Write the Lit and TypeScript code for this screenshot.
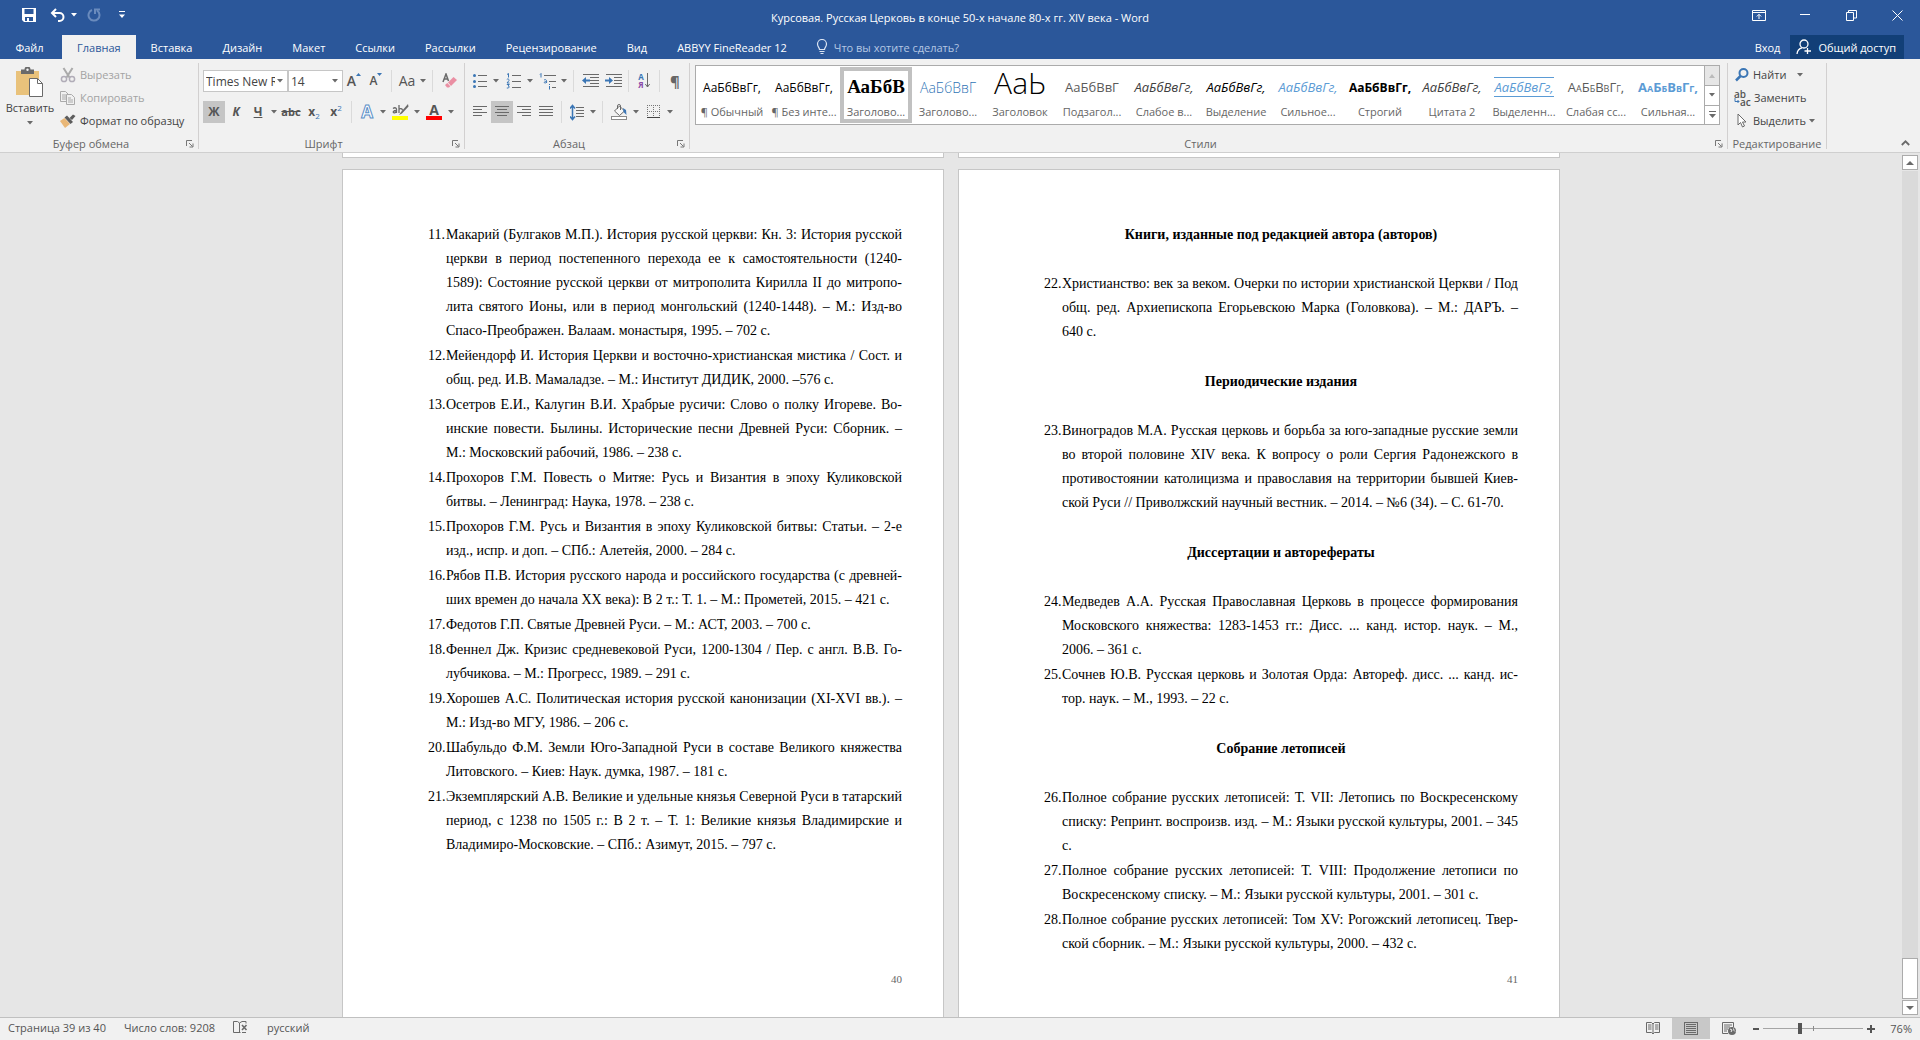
import { LitElement, html, css, svg, nothing } from "lit";
import { customElement, property } from "lit/decorators.js";
import { classMap } from "lit/directives/class-map.js";

const icon = (w: number, h: number, body: unknown) =>
  html`<svg class="icon" width=${w} height=${h} viewBox="0 0 ${w} ${h}" fill="none" aria-hidden="true">${body}</svg>`;

const caret = (color = "#6a6a6a") => icon(6, 4, svg`<path d="M0 0h6L3 3.5z" fill=${color}/>`);

const lines = (rows: [number, number, number][], color = "#6a6a6a") =>
  rows.map(([x, y, w]) => svg`<rect x=${x} y=${y} width=${w} height="1" fill=${color}/>`);

const G = "#6a6a6a";
const B = "#3b76b5";

const icons = {
  save: icon(16, 16, svg`<path d="M1 1h14v14H3l-2-2z" fill="#fff"/><path d="M3.500 2h9v5h-9zM4 10h8v4H4z" fill="#2b579a"/><path d="M6 11h2v3H6z" fill="#fff"/>`),
  undo: icon(16, 14, svg`<path d="M6 1L2 5l4 4M2.500 5H9.500a4 4 0 0 1 0 8H8" stroke="#fff" stroke-width="2"/>`),
  redo: icon(14, 14, svg`<path d="M5 2A5.500 5.500 0 1 0 10 2.500M8 6V1.500h5" stroke="#6a8bbd" stroke-width="2"/>`),
  more: icon(6, 8, svg`<path d="M0 0h6v1H0zM0 3.500h6L3 7z" fill="#fff"/>`),
  display: icon(14, 11, svg`<path d="M.5.5h13v10H.5zM1 2.500h12" stroke="#fff"/><path d="M7 9V4.500M4.800 6.500L7 4.300l2.200 2.200" stroke="#fff"/>`),
  min: icon(10, 2, svg`<path d="M0 0h10v1H0z" fill="#fff"/>`),
  restore: icon(11, 11, svg`<path d="M.5 2.500h7v8h-7zM2.500 2.500v-2h8v7.500h-2.500" stroke="#fff"/>`),
  close: icon(11, 11, svg`<path d="M.5.5l10 10M10.500.5l-10 10" stroke="#fff"/>`),
  bulb: icon(12, 16, svg`<path d="M3.500 10.500C3.500 8.500 1.500 8 1.500 5a4.500 4.500 0 0 1 9 0c0 3-2 3.500-2 5.500zM3.500 12.500h5M4.500 14.500h3" stroke="#dbe4f2" stroke-width="1.200"/>`),
  person: icon(16, 16, svg`<circle cx="8" cy="5" r="4" stroke="#fff" stroke-width="1.300"/><path d="M1 15c.3-3.500 2-5.500 5-6.200M11.500 9v6M8.500 12h6.500" stroke="#fff" stroke-width="1.300"/>`),
  paste: icon(30, 31, svg`<path d="M1 4h23v24H1z" fill="#e9c27b"/><path d="M6 2.500h3.500a3 3 0 0 1 6 0H19V7H6z" fill="#6a6a6a"/><circle cx="12.500" cy="2.800" r="1.200" fill="#f1f1f1"/><path d="M14.500 11.500h8l5 5v13h-13z" fill="#fff" stroke="#6a6a6a"/><path d="M22.500 11.500v5h5" stroke="#6a6a6a"/>`),
  cut: icon(16, 16, svg`<path d="M3.500 1l6 9.500M12.500 1l-6 9.500" stroke="#aaa" stroke-width="2"/><circle cx="4" cy="12" r="2.600" stroke="#b1adb8" stroke-width="1.500"/><circle cx="12" cy="12" r="2.600" stroke="#b1adb8" stroke-width="1.500"/>`),
  copy: icon(16, 14, svg`<path d="M.5.5h5l2.500 2.500v7.500H.5zM2 4h4M2 6h4M2 8h4" stroke="#aaa"/><path d="M6.500 3.500h5l3 3v7h-8z" fill="#f1f1f1" stroke="#aaa"/><path d="M8 7h3M8 9h5M8 11h5" stroke="#aaa"/>`),
  brush: icon(16, 14, svg`<path d="M0 7l4.500-3 5.500 6-5 4z" fill="#e9b777"/><path d="M4.500 3.500L7 1.500l6 6.500-2.500 2z" fill="#5c5c5c"/><path d="M9.500 4L13 .5l2.500 1.500-3.500 4z" fill="#5c5c5c"/>`),
  bullets: icon(14, 14, svg`<circle cx="1.500" cy="1.500" r="1.500" fill=${B}/><circle cx="1.500" cy="7.500" r="1.500" fill=${B}/><circle cx="1.500" cy="12.500" r="1.500" fill=${B}/>${lines([[5, 1, 9], [5, 7, 9], [5, 12, 9]])}`),
  outdent: icon(17, 14, svg`${lines([[1, 0, 16], [8, 3, 9], [8, 6, 9], [8, 9, 9], [1, 12, 16]])}<path d="M0 6.500L4 3v2.500h4v2H4V10z" fill=${B}/>`),
  indent: icon(17, 14, svg`${lines([[1, 0, 16], [9, 3, 8], [9, 6, 8], [9, 9, 8], [1, 12, 16]])}<path d="M8 6.500L4 3v2.500H0v2h4V10z" fill=${B}/>`),
  left: icon(14, 12, svg`${lines([[0, 0, 14], [0, 3, 9], [0, 6, 14], [0, 9, 9]])}`),
  center: icon(14, 12, svg`${lines([[0, 0, 14], [2, 3, 10], [0, 6, 14], [2, 9, 10]])}`),
  right: icon(14, 12, svg`${lines([[0, 0, 14], [5, 3, 9], [0, 6, 14], [5, 9, 9]])}`),
  justify: icon(14, 12, svg`${lines([[0, 0, 14], [0, 3, 14], [0, 6, 14], [0, 9, 14]])}`),
  spacing: icon(14, 17, svg`${lines([[6, 3, 8], [6, 6, 8], [6, 9, 8], [6, 12, 8]])}<path d="M2.500 2v13M0 4.500L2.500 1.500 5 4.500M0 12.500l2.500 3 2.500-3" stroke=${B} stroke-width="1.500"/>`),
  fill: icon(17, 16, svg`<path d="M3.500 7l5-5 5 5-5 4.500z" fill="#f7f7f7" stroke=${G}/><path d="M6.500 5V2a1.500 1.500 0 0 1 3 0v4" stroke=${G}/><path d="M12 4l3 2 .5 5-3-3z" fill=${B}/><rect x=".5" y="12.500" width="15" height="3" fill="#fff" stroke="#8a8a8a"/>`),
  borders: icon(13, 14, svg`<path d="M.5 0v12M12.500 0v12M0 .5h13M6.500 0v12M0 6.500h13" stroke="#777" stroke-dasharray="1 1"/><path d="M0 12.500h13" stroke="#444"/>`),
  sortArrow: icon(5, 15, svg`<path d="M2.500 0v14M.3 11l2.200 3 2.200-3" stroke=${G}/>`),
  find: icon(14, 14, svg`<circle cx="8.500" cy="5" r="4" stroke=${B} stroke-width="2"/><path d="M5.500 8L1 12.500" stroke=${B} stroke-width="2.500"/>`),
  hook: icon(6, 6, svg`<path d="M1 0v3.500h4M3.500 2L5 3.500 3.500 5" stroke=${B}/>`),
  pointer: icon(10, 15, svg`<path d="M1 1v11l2.500-2.500L5.500 14l2-1-2-4H9z" fill="#fff" stroke=${G}/>`),
  launcher: icon(8, 8, svg`<path d="M.5 6V.5H6M3 3l3.500 3.500M7 3.500V7H3.500" stroke="#777"/>`),
  collapse: icon(9, 6, svg`<path d="M.8 5L4.500 1.300 8.200 5" stroke=${G} stroke-width="1.800"/>`),
  up: icon(8, 4, svg`<path d="M0 4h8L4 0z" fill=${G}/>`),
  down: icon(8, 4, svg`<path d="M0 0h8L4 4z" fill=${G}/>`),
  galleryMore: icon(7, 7, svg`<path d="M0 0h7v1H0zM0 3h7L3.500 7z" fill=${G}/>`),
  galleryUp: icon(6, 4, svg`<path d="M0 4h6L3 0z" fill="#bbb"/>`),
  proof: icon(16, 14, svg`<path d="M6.500 11.500H.5v-11h4l2 1.500v10l1-1M6.500 2L9 .5h4v2M9 11.500h4" stroke=${G}/><path d="M9 4l4.500 5M13.500 4L9 9" stroke=${G} stroke-width="1.600"/>`),
  read: icon(14, 13, svg`<path d="M.5.500h5L7 2l1.500-1.500h5v10h-5L7 12l-1.500-1.500h-5zM7 2v10M2 3h3.500M2 5h3.500M2 7h3.500M9 3h3.500M9 5h3.500M9 7h3.500" stroke=${G}/>`),
  print: icon(14, 13, svg`<rect x=".5" y=".5" width="13" height="12" stroke=${G}/>${lines([[2, 2, 10], [2, 4, 10], [2, 6, 10], [2, 8, 10], [2, 10, 10]])}`),
  web: icon(15, 14, svg`<path d="M6 11.500H.5V.5h11V5M2 3h8M2 5h6M2 7h4M2 9h3" stroke=${G}/><circle cx="10" cy="9" r="4" fill=${G}/><path d="M8 7l2 1-1 2M11.500 6.500l.5 2 1 1" stroke="#f1f1f1"/>`),
};

const base = css`
  :host { font-family: "Open Sans", "Noto Sans", sans-serif; font-size: 11px; color: #444; }
  * { box-sizing: border-box; }
  button, select, input { font: inherit; color: inherit; border: 0; padding: 0; margin: 0; background: none; border-radius: 0; }
  button { display: flex; align-items: center; justify-content: center; white-space: nowrap; }
  .icon { display: block; flex: none; }
`;

@customElement("title-bar")
export class TitleBar extends LitElement {
  static styles = [base, css`
    :host { display: block; background: #2b579a; color: #fff; }
    .caption { display: grid; grid-template-columns: 1fr auto 1fr; height: 35px; }
    .quick { display: flex; align-items: center; padding: 0 0 6px 19px; }
    .quick button { height: 24px; width: 20px; }
    .quick .save { margin-right: 9px; }
    .quick .arrow { width: 12px; }
    .quick .redo { margin: 0 8px 0 4px; }
    h1 { margin: 0; font-size: 11px; font-weight: 400; line-height: 36px; }
    .window { display: flex; justify-content: flex-end; }
    .window button { width: 46px; height: 30px; }
    .tabs { display: flex; height: 24px; }
    .tabs button { padding: 0 15px; height: 24px; }
    .tabs .file { width: 62px; padding: 0 3px 0 0; }
    .tabs .on { background: #f1f1f1; color: #2b579a; }
    .ask { display: flex; align-items: center; gap: 6px; margin-left: 14px; }
    .ask input { width: 160px; outline: 0; }
    .ask input::placeholder { color: #b5c7e3; opacity: 1; }
    .account { margin-left: auto; display: flex; padding-right: 16px; }
    .tabs .login { padding: 0 10px; }
    .tabs .share { background: #123f77; gap: 6px; padding: 0 8px 0 6px; }
  `];

  render() {
    const tabs = ["Главная", "Вставка", "Дизайн", "Макет", "Ссылки", "Рассылки", "Рецензирование", "Вид", "ABBYY FineReader 12"];
    return html`
      <div class="caption">
        <div class="quick">
          <button class="save" aria-label="Сохранить">${icons.save}</button>
          <button aria-label="Отменить">${icons.undo}</button>
          <button class="arrow" aria-label="Список отмены">${caret("#fff")}</button>
          <button class="redo" aria-label="Повторить">${icons.redo}</button>
          <button aria-label="Настройка панели">${icons.more}</button>
        </div>
        <h1>Курсовая. Русская Церковь в конце 50-х начале 80-х гг. XIV века - Word</h1>
        <div class="window">
          <button aria-label="Параметры ленты">${icons.display}</button>
          <button aria-label="Свернуть">${icons.min}</button>
          <button aria-label="Восстановить">${icons.restore}</button>
          <button aria-label="Закрыть">${icons.close}</button>
        </div>
      </div>
      <nav class="tabs">
        <button class="file">Файл</button>
        ${tabs.map((t, i) => html`<button class=${classMap({ on: i === 0 })}>${t}</button>`)}
        <label class="ask">${icons.bulb}<input type="text" aria-label="Помощник" placeholder="Что вы хотите сделать?"></label>
        <div class="account">
          <button class="login">Вход</button>
          <button class="share">${icons.person}Общий доступ</button>
        </div>
      </nav>`;
  }
}

@customElement("ribbon-group")
export class RibbonGroup extends LitElement {
  @property() label = "";
  @property({ type: Boolean }) launcher = false;

  static styles = [base, css`
    :host { display: flex; flex-direction: column; border-right: 1px solid #d2d0d0; margin: 4px 0 3px; }
    .body { flex: 1; min-height: 0; }
    .foot { display: flex; height: 10px; align-items: center; color: #666; }
    .foot span { flex: 1; text-align: center; line-height: 16px; white-space: nowrap; }
    .foot button { width: 16px; height: 16px; }
  `];

  render() {
    return html`
      <div class="body"><slot></slot></div>
      <div class="foot">
        <span>${this.label}</span>
        ${this.launcher ? html`<button aria-label="Параметры: ${this.label}">${icons.launcher}</button>` : nothing}
      </div>`;
  }
}

interface StyleItem { name: string; kind: string; sample?: string; }

const styleItems: StyleItem[] = [
  { name: "¶ Обычный", kind: "plain" },
  { name: "¶ Без инте...", kind: "plain" },
  { name: "Заголово...", kind: "h1", sample: "АаБбВ" },
  { name: "Заголово...", kind: "h2", sample: "АаБбВвГ" },
  { name: "Заголовок", kind: "title", sample: "АаЬ" },
  { name: "Подзагол...", kind: "sub", sample: "АаБбВвГ" },
  { name: "Слабое в...", kind: "soft" },
  { name: "Выделение", kind: "em" },
  { name: "Сильное...", kind: "blue" },
  { name: "Строгий", kind: "strong" },
  { name: "Цитата 2", kind: "soft" },
  { name: "Выделенн...", kind: "quote" },
  { name: "Слабая сс...", kind: "caps" },
  { name: "Сильная...", kind: "bluecaps" },
];

@customElement("word-ribbon")
export class WordRibbon extends LitElement {
  static styles = [base, css`
    :host { display: flex; height: 93px; background: #f1f1f1; border-bottom: 1px solid #cfcfcf; }
    .clipboard { width: 199px; }
    .font { width: 266px; }
    .para { width: 225px; }
    .styles { flex: 1; min-width: 0; }
    .edit { width: 99px; }
    .clip { display: grid; grid-template-columns: 60px 1fr; }
    .paste { flex-direction: column; justify-content: flex-start; padding-top: 4px; }
    .paste span { line-height: 20px; margin-bottom: 3px; }
    .stack button { height: 23px; width: 100%; justify-content: flex-start; gap: 4px; }
    .stack .off { color: #a3a3a3; }
    .slot16 { display: flex; width: 16px; justify-content: center; }
    .rows { padding-left: 4px; }
    .row { display: flex; align-items: center; height: 22px; margin-top: 7px; }
    .row + .row { margin-top: 9px; }
    .row button { height: 22px; width: 22px; flex: none; }
    .row .wide { width: 24px; }
    .row .drop { width: 10px; }
    .row .on { background: #c5c5c5; }
    .sep { width: 1px; height: 22px; margin: 0 4px; background: #dadada; }
    .combo { position: relative; display: flex; height: 22px; border: 1px solid #c6c6c6; background: #fff; font-size: 12px; }
    .combo select { width: 100%; padding: 0 12px 0 2px; appearance: none; outline: 0; }
    .combo .icon { position: absolute; right: 4px; top: 8px; pointer-events: none; }
    .family { width: 85px; }
    .size { width: 55px; }
    .glyph { font-weight: 700; font-size: 12px; line-height: 16px; color: #555; }
    .big { font-size: 14px; font-weight: 600; }
    .mid { font-size: 12px; font-weight: 600; }
    .case { font-size: 14px; font-weight: 400; }
    .ital { font-style: italic; }
    .under { text-decoration: underline; }
    .strike { text-decoration: line-through; font-size: 11px; }
    .tiny { font-size: 8px; line-height: 8px; color: #3b76b5; }
    .low { align-self: flex-end; }
    .high { align-self: flex-start; }
    .pair { display: flex; align-items: flex-start; }
    .outline { font-size: 17px; line-height: 18px; color: #fff; -webkit-text-stroke: 1px #5b8fc7; }
    .mark { display: flex; flex-direction: column; align-items: center; width: 16px; line-height: 12px; border-bottom: 4px solid #ff0; }
    .red { border-color: #f00; font-size: 14px; }
    .sort { display: flex; gap: 1px; }
    .az { display: flex; flex-direction: column; font-size: 8px; line-height: 8px; font-weight: 700; color: #3b76b5; }
    .az span + span { color: #8a4aa8; }
    .pil { font-size: 15px; font-weight: 700; color: #666; }
    .gallery { display: flex; height: 60px; margin: 2px 7px 0 5px; border: 1px solid #ababab; background: #fff; }
    .items { flex: 1; min-width: 0; display: grid; grid-template-columns: repeat(14, 1fr); }
    .items button { flex-direction: column; justify-content: flex-start; min-width: 0; padding-top: 6px; }
    .items .on { outline: 4px solid #c1c1c1; outline-offset: -4px; margin: 1px 0; padding-top: 5px; }
    .items .name { line-height: 20px; color: #666; }
    .sample { display: flex; align-items: center; justify-content: center; height: 30px; font-size: 13px; color: #000; }
    .plain { font-size: 12px; }
    .h1 { font-family: "Liberation Serif", serif; font-weight: 700; font-size: 19px; }
    .h2 { color: #2e74b5; font-weight: 300; font-size: 14px; }
    .title { font-size: 30px; font-weight: 300; line-height: 22px; height: 22px; margin-bottom: 8px; }
    .sub { color: #5a5a5a; }
    .soft { color: #404040; font-style: italic; }
    .em { font-style: italic; }
    .blue { color: #5b9bd5; font-style: italic; }
    .strong { font-weight: 700; font-size: 12px; }
    .quote { color: #5b9bd5; font-style: italic; height: 20px; margin: 5px 0; border: solid #5b9bd5; border-width: 1px 0; }
    .caps { color: #5a5a5a; font-variant: small-caps; }
    .bluecaps { color: #5b9bd5; font-variant: small-caps; font-weight: 700; }
    .nav { display: grid; grid-template-rows: 1fr 1fr 1fr; width: 15px; border-left: 1px solid #ababab; }
    .nav button + button { border-top: 1px solid #ababab; }
    .nav .off { background: #e6e6e6; }
    .tools { padding-left: 6px; }
    .tools button { gap: 3px; }
    .tools .gap { margin-left: 8px; }
    .swap { display: grid; width: 17px; font-size: 10px; line-height: 8px; font-weight: 600; color: #555; }
    .swap span { display: flex; }
    .tail { flex: 0 0 93px; display: flex; justify-content: flex-end; align-items: flex-end; padding: 0 10px 2px; }
    .tail button { width: 10px; height: 14px; }
  `];

  private btn(label: string, body: unknown, cls = "") {
    return html`<button class=${cls} aria-label=${label}>${body}</button>`;
  }
  private drop(label: string) {
    return this.btn(label, caret(), "drop");
  }

  render() {
    const sep = html`<span class="sep"></span>`;
    return html`
      <ribbon-group class="clipboard" label="Буфер обмена" launcher>
        <div class="clip">
          <button class="paste">${icons.paste}<span>Вставить</span>${caret()}</button>
          <div class="stack">
            <button class="off"><span class="slot16">${icons.cut}</span>Вырезать</button>
            <button class="off"><span class="slot16">${icons.copy}</span>Копировать</button>
            <button><span class="slot16">${icons.brush}</span>Формат по образцу</button>
          </div>
        </div>
      </ribbon-group>
      <ribbon-group class="font" label="Шрифт" launcher>
        <div class="rows">
          <div class="row">
            <label class="combo family"><select aria-label="Шрифт"><option>Times New Roman</option></select>${caret()}</label>
            <label class="combo size"><select aria-label="Размер шрифта"><option>14</option></select>${caret()}</label>
            ${this.btn("Увеличить размер", html`<span class="pair"><span class="glyph big">A</span>${icon(5, 4, svg`<path d="M0 3h5L2.500 0z" fill=${B}/>`)}</span>`)}
            ${this.btn("Уменьшить размер", html`<span class="pair"><span class="glyph mid">A</span>${icon(5, 4, svg`<path d="M0 0h5L2.500 3z" fill=${B}/>`)}</span>`)}
            ${sep}
            ${this.btn("Регистр", html`<span class="glyph case">Aa</span>`)}${this.drop("Варианты регистра")}
            ${sep}
            ${this.btn("Удалить форматирование", icon(16, 16, svg`<path d="M2 9L5 1l2.500 7M3 6h4" stroke=${G} stroke-width="1.500"/><path d="M7 9.500L12.500 4 16 7l-6 6z" fill="#ea8fa3"/><path d="M4 12l2.300-2 3 3.300L8 14.500H6z" fill="#ea8fa3"/>`), "wide")}
          </div>
          <div class="row">
            ${this.btn("Полужирный", html`<span class="glyph">Ж</span>`, "on")}
            ${this.btn("Курсив", html`<span class="glyph ital">К</span>`)}
            ${this.btn("Подчёркнутый", html`<span class="glyph under">Ч</span>`)}${this.drop("Вид подчёркивания")}
            ${this.btn("Зачёркнутый", html`<span class="glyph strike">abc</span>`, "wide")}
            ${this.btn("Подстрочный", html`<span class="pair"><span class="glyph">x</span><span class="tiny low">2</span></span>`)}
            ${this.btn("Надстрочный", html`<span class="pair"><span class="glyph">x</span><span class="tiny high">2</span></span>`)}
            ${sep}
            ${this.btn("Текстовые эффекты", html`<span class="glyph outline">A</span>`)}${this.drop("Варианты эффектов")}
            ${this.btn("Цвет выделения", html`<span class="glyph mark">${icon(17, 12, svg`<path d="M16 0l-7 8-2 3 3-1.500 6.500-7z" fill=${G}/><path d="M1 4.500c2-1.500 3.500-.5 3.500 1V9M4.500 6.500C1 6.500.5 8.500 2 8.800c1.500.3 2.500-1 2.500-1.500M7 1v8M7 5.500c1-1.500 3.500-1 3.500 1" stroke=${G} stroke-width="1.300"/>`)}</span>`, "wide")}${this.drop("Другие цвета выделения")}
            ${this.btn("Цвет текста", html`<span class="glyph mark red">A</span>`, "wide")}${this.drop("Другие цвета текста")}
          </div>
        </div>
      </ribbon-group>
      <ribbon-group class="para" label="Абзац" launcher>
        <div class="rows">
          <div class="row">
            ${this.btn("Маркеры", icons.bullets)}${this.drop("Библиотека маркеров")}
            ${this.btn("Нумерация", icon(15, 16, svg`<path d="M1 1.500L2.500.5v4M.8 6.500C1.500 5.500 3.500 6 3 7.500L1 10h2.500M.8 11.500h2.500L2 13c2 0 1.500 2.500-1.200 2" stroke=${B}/>${lines([[6, 2, 9], [6, 8, 9], [6, 14, 9]])}`), "wide")}${this.drop("Библиотека нумерации")}
            ${this.btn("Многоуровневый список", icon(17, 17, svg`<path d="M1 1.500L2 .5v4M5 7c2-1 3 0 2.500 3M7.500 8.500C4 8.500 5 11 7.500 9.500M10.500 13v3.500M10.500 11v1" stroke=${B}/>${lines([[5, 2, 12], [10, 8, 7], [13, 14, 4]])}`), "wide")}${this.drop("Библиотека списков")}
            ${sep}
            ${this.btn("Уменьшить отступ", icons.outdent, "wide")}
            ${this.btn("Увеличить отступ", icons.indent)}
            ${sep}
            ${this.btn("Сортировка", html`<span class="sort"><span class="az"><span>А</span><span>Я</span></span>${icons.sortArrow}</span>`)}
            ${sep}
            ${this.btn("Все знаки", html`<span class="pil">¶</span>`)}
          </div>
          <div class="row">
            ${this.btn("По левому краю", icons.left)}
            ${this.btn("По центру", icons.center, "on")}
            ${this.btn("По правому краю", icons.right)}
            ${this.btn("По ширине", icons.justify)}
            ${sep}
            ${this.btn("Интервал", icons.spacing)}${this.drop("Варианты интервала")}
            ${sep}
            ${this.btn("Заливка", icons.fill, "wide")}${this.drop("Цвета заливки")}
            ${this.btn("Границы", icons.borders, "wide")}${this.drop("Варианты границ")}
          </div>
        </div>
      </ribbon-group>
      <ribbon-group class="styles" label="Стили" launcher>
        <div class="gallery">
          <div class="items">
            ${styleItems.map((s, i) => html`
              <button class=${classMap({ on: i === 2 })}>
                <span class="sample ${s.kind}">${s.sample ?? "АаБбВвГг,"}</span>
                <span class="name">${s.name}</span>
              </button>`)}
          </div>
          <div class="nav">
            <button class="off" aria-label="Вверх">${icons.galleryUp}</button>
            <button aria-label="Вниз">${caret()}</button>
            <button aria-label="Все стили">${icons.galleryMore}</button>
          </div>
        </div>
      </ribbon-group>
      <ribbon-group class="edit" label="Редактирование">
        <div class="stack tools">
          <button><span class="slot16">${icons.find}</span>Найти<span class="gap">${caret()}</span></button>
          <button><span class="swap"><span>ab</span><span>${icons.hook}ac</span></span>Заменить</button>
          <button><span class="slot16">${icons.pointer}</span>Выделить${caret()}</button>
        </div>
      </ribbon-group>
      <div class="tail"><button aria-label="Свернуть ленту">${icons.collapse}</button></div>`;
  }
}

interface Entry { n: number; rows: string[]; }
type Block = Entry | string;

const leftPage: Block[] = [
  { n: 11, rows: ["Макарий (Булгаков М.П.). История русской церкви: Кн. 3: История русской", "церкви в период постепенного перехода ее к самостоятельности (1240-", "1589): Состояние русской церкви от митрополита Кирилла II до митропо-", "лита святого Ионы, или в период монгольский (1240-1448). – М.: Изд-во", "Спасо-Преображен. Валаам. монастыря, 1995. – 702 с."] },
  { n: 12, rows: ["Мейендорф И. История Церкви и восточно-христианская мистика / Сост. и", "общ. ред. И.В. Мамаладзе. – М.: Институт ДИДИК, 2000. –576 с."] },
  { n: 13, rows: ["Осетров Е.И., Калугин В.И. Храбрые русичи: Слово о полку Игореве. Во-", "инские повести. Былины. Исторические песни Древней Руси: Сборник. –", "М.: Московский рабочий, 1986. – 238 с."] },
  { n: 14, rows: ["Прохоров Г.М. Повесть о Митяе: Русь и Византия в эпоху Куликовской", "битвы. – Ленинград: Наука, 1978. – 238 с."] },
  { n: 15, rows: ["Прохоров Г.М. Русь и Византия в эпоху Куликовской битвы: Статьи. – 2-е", "изд., испр. и доп. – СПб.: Алетейя, 2000. – 284 с."] },
  { n: 16, rows: ["Рябов П.В. История русского народа и российского государства (с древней-", "ших времен до начала XX века): В 2 т.: Т. 1. – М.: Прометей, 2015. – 421 с."] },
  { n: 17, rows: ["Федотов Г.П. Святые Древней Руси. – М.: АСТ, 2003. – 700 с."] },
  { n: 18, rows: ["Феннел Дж. Кризис средневековой Руси, 1200-1304 / Пер. с англ. В.В. Го-", "лубчикова. – М.: Прогресс, 1989. – 291 с."] },
  { n: 19, rows: ["Хорошев А.С. Политическая история русской канонизации (XI-XVI вв.). –", "М.: Изд-во МГУ, 1986. – 206 с."] },
  { n: 20, rows: ["Шабульдо Ф.М. Земли Юго-Западной Руси в составе Великого княжества", "Литовского. – Киев: Наук. думка, 1987. – 181 с."] },
  { n: 21, rows: ["Экземплярский А.В. Великие и удельные князья Северной Руси в татарский", "период, с 1238 по 1505 г.: В 2 т. – Т. 1: Великие князья Владимирские и", "Владимиро-Московские. – СПб.: Азимут, 2015. – 797 с."] },
];

const rightPage: Block[] = [
  "Книги, изданные под редакцией автора (авторов)",
  { n: 22, rows: ["Христианство: век за веком. Очерки по истории христианской Церкви / Под", "общ. ред. Архиепископа Егорьевскою Марка (Головкова). – М.: ДАРЪ. –", "640 с."] },
  "Периодические издания",
  { n: 23, rows: ["Виноградов М.А. Русская церковь и борьба за юго-западные русские земли", "во второй половине XIV века. К вопросу о роли Сергия Радонежского в", "противостоянии католицизма и православия на территории бывшей Киев-", "ской Руси // Приволжский научный вестник. – 2014. – №6 (34). – С. 61-70."] },
  "Диссертации и авторефераты",
  { n: 24, rows: ["Медведев А.А. Русская Православная Церковь в процессе формирования", "Московского княжества: 1283-1453 гг.: Дисс. ... канд. истор. наук. – М.,", "2006. – 361 с."] },
  { n: 25, rows: ["Сочнев Ю.В. Русская церковь и Золотая Орда: Автореф. дисс. ... канд. ис-", "тор. наук. – М., 1993. – 22 с."] },
  "Собрание летописей",
  { n: 26, rows: ["Полное собрание русских летописей: Т. VII: Летопись по Воскресенскому", "списку: Репринт. воспроизв. изд. – М.: Языки русской культуры, 2001. – 345", "с."] },
  { n: 27, rows: ["Полное собрание русских летописей: Т. VIII: Продолжение летописи по", "Воскресенскому списку. – М.: Языки русской культуры, 2001. – 301 с."] },
  { n: 28, rows: ["Полное собрание русских летописей: Том XV: Рогожский летописец. Твер-", "ской сборник. – М.: Языки русской культуры, 2000. – 432 с."] },
];

@customElement("document-view")
export class DocumentView extends LitElement {
  static styles = [base, css`
    :host { display: flex; min-height: 0; background: #e6e6e6; }
    .canvas { flex: 1; display: grid; grid-template-columns: 602px 602px; grid-template-rows: 5px auto; gap: 11px 14px; justify-content: center; overflow: hidden; }
    .above { background: #fff; border: 1px solid #c6c6c6; border-top: 0; }
    .page { display: flex; flex-direction: column; aspect-ratio: 210 / 297; background: #fff; border: 1px solid #c6c6c6; padding: 53px 41px 32px 103px; }
    .flow { display: flex; flex-direction: column; gap: 1px; font-family: "Liberation Serif", serif; font-size: 14px; line-height: 24px; color: #000; margin-left: -18px; }
    .entry { display: grid; grid-template-columns: 18px 1fr; }
    .num { white-space: nowrap; }
    .rows { min-width: 0; }
    .line { display: block; white-space: nowrap; text-align: justify; text-align-last: justify; }
    .line:last-child { text-align-last: left; }
    h2 { margin: 25px 0 24px; font-size: 14px; line-height: 24px; text-align: center; }
    h2:first-child { margin-top: 0; }
    .number { margin-top: auto; text-align: right; font-family: "Liberation Serif", serif; font-size: 11px; line-height: 16px; color: #666; }
    .scroll { display: flex; flex-direction: column; width: 18px; padding: 2px 2px 2px 0; gap: 1px; }
    .scroll button { height: 15px; border: 1px solid #ababab; background: #fff; }
    .track { flex: 1; display: flex; flex-direction: column; justify-content: flex-end; background: #dadada; }
    .thumb { height: 41px; border: 1px solid #ababab; background: #fff; }
  `];

  private page(blocks: Block[], num: number) {
    return html`
      <article class="page">
        <div class="flow">
          ${blocks.map((b) => typeof b === "string"
            ? html`<h2>${b}</h2>`
            : html`<div class="entry"><span class="num">${b.n}.</span><div class="rows">${b.rows.map((r) => html`<span class="line">${r}</span>`)}</div></div>`)}
        </div>
        <div class="number">${num}</div>
      </article>`;
  }

  render() {
    return html`
      <div class="canvas">
        <div class="above"></div><div class="above"></div>
        ${this.page(leftPage, 40)}${this.page(rightPage, 41)}
      </div>
      <div class="scroll">
        <button aria-label="Прокрутить вверх">${icons.up}</button>
        <div class="track"><div class="thumb"></div></div>
        <button aria-label="Прокрутить вниз">${icons.down}</button>
      </div>`;
  }
}

@customElement("status-bar")
export class StatusBar extends LitElement {
  static styles = [base, css`
    :host { display: flex; align-items: flex-start; justify-content: space-between; height: 22px; background: #f1f1f1; border-top: 1px solid #c0c0c0; color: #555; }
    .info, .view { display: flex; align-items: center; height: 21px; }
    .info { gap: 18px; padding: 0 0 2px 8px; }
    .view button { width: 38px; height: 21px; }
    .view .on { background: #c8c8c8; }
    .view .step { width: 15px; }
    .range { position: relative; display: flex; width: 100px; }
    .range::after { content: ""; position: absolute; left: 50px; top: 3px; width: 1px; height: 5px; background: #8a8a8a; }
    input { appearance: none; width: 100%; height: 11px; background: linear-gradient(#a5a5a5, #a5a5a5) center / 100% 1px no-repeat; }
    input::-webkit-slider-thumb { appearance: none; width: 4px; height: 11px; background: #555; }
    .pct { width: 42px; padding: 0 8px 1px 0; text-align: right; }
  `];

  render() {
    return html`
      <div class="info">
        <span>Страница 39 из 40</span><span>Число слов: 9208</span>
        <button aria-label="Правописание">${icons.proof}</button><span>русский</span>
      </div>
      <div class="view">
        <button aria-label="Режим чтения">${icons.read}</button>
        <button class="on" aria-label="Разметка страницы">${icons.print}</button>
        <button aria-label="Веб-документ">${icons.web}</button>
        <button class="step" aria-label="Уменьшить">${icon(6, 2, svg`<path d="M0 0h6v2H0z" fill="#555"/>`)}</button>
        <label class="range"><input type="range" min="10" max="190" value="76" aria-label="Масштаб"></label>
        <button class="step" aria-label="Увеличить">${icon(8, 8, svg`<path d="M3 0h2v3h3v2H5v3H3V5H0V3h3z" fill="#555"/>`)}</button>
        <span class="pct">76%</span>
      </div>`;
  }
}

@customElement("app-root")
export class AppRoot extends LitElement {
  static styles = css`
    :host { display: flex; flex-direction: column; height: 100vh; overflow: hidden; }
    title-bar, word-ribbon, status-bar { flex: none; }
    document-view { flex: 1; }
  `;

  render() {
    return html`<title-bar></title-bar><word-ribbon></word-ribbon><document-view></document-view><status-bar></status-bar>`;
  }
}
